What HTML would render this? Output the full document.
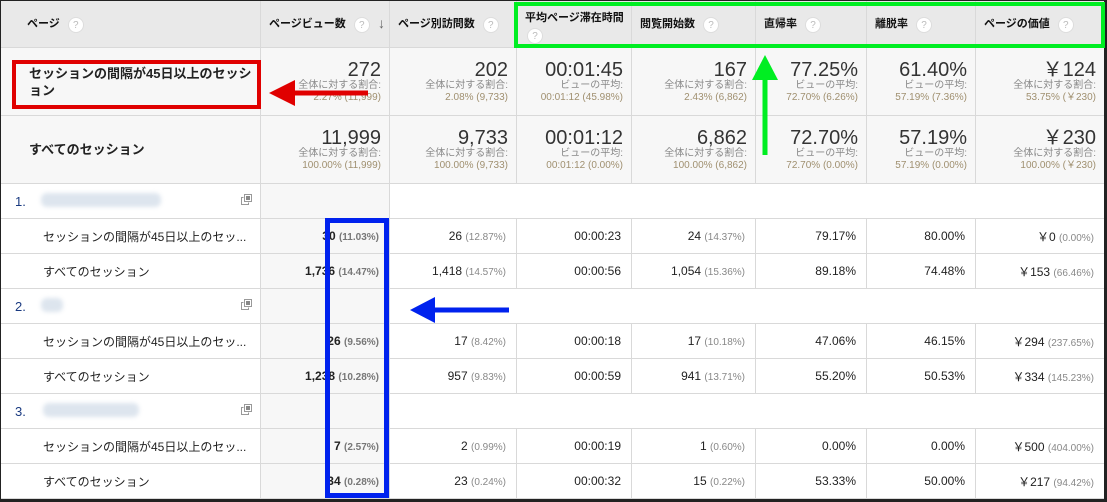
<!DOCTYPE html>
<html><head><meta charset="utf-8"><style>
*{margin:0;padding:0;box-sizing:border-box}
body{width:1107px;height:502px;background:#fff;font-family:"Liberation Sans","Noto Sans CJK JP",sans-serif;position:relative;overflow:hidden;color:#222}
table{position:absolute;left:0;top:0;border-collapse:collapse;table-layout:fixed;width:1104px}
td,th{border:1px solid #d9d9d9;overflow:hidden;white-space:nowrap}
th{background:#e9e9e9;height:47px;font-size:11px;font-weight:bold;text-align:left;padding-left:8px;color:#111}
.q{display:inline-block;width:16px;height:16px;border-radius:50%;background:#fff;color:#bbb;font-size:10px;text-align:center;line-height:16px;margin-left:8px;border:1px solid #ddd;font-weight:normal;vertical-align:middle}
.sum td{background:#f7f7f7;height:68px;text-align:right;padding-right:8px;vertical-align:top;padding-top:12px}
.sum td.l{text-align:left;padding-left:28px;vertical-align:middle;padding-top:0;font-weight:bold;font-size:13px;white-space:normal;line-height:17px}
.big{font-size:20px;color:#333;line-height:20px}
.s{font-size:10px;color:#888;line-height:12px}
.s2{font-size:10px;color:#a09070;line-height:12px}
.d td{height:35px;text-align:right;padding-right:10px;font-size:12px;color:#222}
.d td.l{text-align:left;padding-left:42px;color:#222}
.d td.pv{background:#f7f7f7;font-weight:bold}
.p{font-size:10px;color:#888;font-weight:normal}
.pv .p{font-weight:bold;color:#777}
.g td{height:35px;border-left:none;border-right:none}
.g td.l{border-left:1px solid #d9d9d9;font-size:13px;color:#1a3a80;padding-left:14px;position:relative}
.g td.pv{background:#f7f7f7;border-left:1px solid #d9d9d9;border-right:1px solid #d9d9d9}
.blur{position:absolute;top:9px;height:14px;background:#dde5ee;border-radius:6px;filter:blur(2px)}
.ic{position:absolute;right:8px;top:10px;width:11px;height:11px}
</style></head><body>
<table>
<colgroup><col style="width:260px"><col style="width:129px"><col style="width:127px"><col style="width:115px"><col style="width:124px"><col style="width:111px"><col style="width:109px"><col style="width:129px"></colgroup>
<tr><th style="padding-left:26px">ページ<span class="q">?</span></th><th>ページビュー数<span class="q">?</span><span style="float:right;margin-right:4px;color:#666;font-size:14px">↓</span></th><th>ページ別訪問数<span class="q">?</span></th><th style="vertical-align:top;padding-top:10px;line-height:14px">平均ページ滞在時間<br><span class="q" style="margin-left:2px;margin-top:3px">?</span></th><th>閲覧開始数<span class="q">?</span></th><th>直帰率<span class="q">?</span></th><th>離脱率<span class="q">?</span></th><th>ページの価値<span class="q">?</span></th></tr>
<tr class="sum"><td class="l">セッションの間隔が45日以上のセッション</td>
<td><div class="big">272</div><div class="s">全体に対する割合:</div><div class="s2">2.27% (11,999)</div></td>
<td><div class="big">202</div><div class="s">全体に対する割合:</div><div class="s2">2.08% (9,733)</div></td>
<td><div class="big">00:01:45</div><div class="s">ビューの平均:</div><div class="s2">00:01:12 (45.98%)</div></td>
<td><div class="big">167</div><div class="s">全体に対する割合:</div><div class="s2">2.43% (6,862)</div></td>
<td><div class="big">77.25%</div><div class="s">ビューの平均:</div><div class="s2">72.70% (6.26%)</div></td>
<td><div class="big">61.40%</div><div class="s">ビューの平均:</div><div class="s2">57.19% (7.36%)</div></td>
<td><div class="big">￥124</div><div class="s">全体に対する割合:</div><div class="s2">53.75% (￥230)</div></td></tr>
<tr class="sum"><td class="l">すべてのセッション</td>
<td><div class="big">11,999</div><div class="s">全体に対する割合:</div><div class="s2">100.00% (11,999)</div></td>
<td><div class="big">9,733</div><div class="s">全体に対する割合:</div><div class="s2">100.00% (9,733)</div></td>
<td><div class="big">00:01:12</div><div class="s">ビューの平均:</div><div class="s2">00:01:12 (0.00%)</div></td>
<td><div class="big">6,862</div><div class="s">全体に対する割合:</div><div class="s2">100.00% (6,862)</div></td>
<td><div class="big">72.70%</div><div class="s">ビューの平均:</div><div class="s2">72.70% (0.00%)</div></td>
<td><div class="big">57.19%</div><div class="s">ビューの平均:</div><div class="s2">57.19% (0.00%)</div></td>
<td><div class="big">￥230</div><div class="s">全体に対する割合:</div><div class="s2">100.00% (￥230)</div></td></tr>

<tr class="g"><td class="l">1.<div class="blur" style="left:40px;width:120px"></div><svg class="ic" viewBox="0 0 11 11"><rect x="3.5" y="0.5" width="7" height="7" fill="#fff" stroke="#999"/><rect x="5" y="2" width="4" height="4" fill="#888"/><path d="M2.5 3.5H0.5V10.5H7.5V8.5" fill="none" stroke="#999"/></svg></td><td class="pv"></td><td></td><td></td><td></td><td></td><td></td><td style="border-right:1px solid #d9d9d9"></td></tr>
<tr class="d"><td class="l">セッションの間隔が45日以上のセッ...</td><td class="pv">30 <span class="p">(11.03%)</span></td><td>26 <span class="p">(12.87%)</span></td><td>00:00:23</td><td>24 <span class="p">(14.37%)</span></td><td>79.17%</td><td>80.00%</td><td>￥0 <span class="p">(0.00%)</span></td></tr>
<tr class="d"><td class="l">すべてのセッション</td><td class="pv">1,736 <span class="p">(14.47%)</span></td><td>1,418 <span class="p">(14.57%)</span></td><td>00:00:56</td><td>1,054 <span class="p">(15.36%)</span></td><td>89.18%</td><td>74.48%</td><td>￥153 <span class="p">(66.46%)</span></td></tr>

<tr class="g"><td class="l">2.<div class="blur" style="left:40px;width:22px"></div><svg class="ic" viewBox="0 0 11 11"><rect x="3.5" y="0.5" width="7" height="7" fill="#fff" stroke="#999"/><rect x="5" y="2" width="4" height="4" fill="#888"/><path d="M2.5 3.5H0.5V10.5H7.5V8.5" fill="none" stroke="#999"/></svg></td><td class="pv"></td><td></td><td></td><td></td><td></td><td></td><td style="border-right:1px solid #d9d9d9"></td></tr>
<tr class="d"><td class="l">セッションの間隔が45日以上のセッ...</td><td class="pv">26 <span class="p">(9.56%)</span></td><td>17 <span class="p">(8.42%)</span></td><td>00:00:18</td><td>17 <span class="p">(10.18%)</span></td><td>47.06%</td><td>46.15%</td><td>￥294 <span class="p">(237.65%)</span></td></tr>
<tr class="d"><td class="l">すべてのセッション</td><td class="pv">1,238 <span class="p">(10.28%)</span></td><td>957 <span class="p">(9.83%)</span></td><td>00:00:59</td><td>941 <span class="p">(13.71%)</span></td><td>55.20%</td><td>50.53%</td><td>￥334 <span class="p">(145.23%)</span></td></tr>

<tr class="g"><td class="l">3.<div class="blur" style="left:42px;width:96px"></div><svg class="ic" viewBox="0 0 11 11"><rect x="3.5" y="0.5" width="7" height="7" fill="#fff" stroke="#999"/><rect x="5" y="2" width="4" height="4" fill="#888"/><path d="M2.5 3.5H0.5V10.5H7.5V8.5" fill="none" stroke="#999"/></svg></td><td class="pv"></td><td></td><td></td><td></td><td></td><td></td><td style="border-right:1px solid #d9d9d9"></td></tr>
<tr class="d"><td class="l">セッションの間隔が45日以上のセッ...</td><td class="pv">7 <span class="p">(2.57%)</span></td><td>2 <span class="p">(0.99%)</span></td><td>00:00:19</td><td>1 <span class="p">(0.60%)</span></td><td>0.00%</td><td>0.00%</td><td>￥500 <span class="p">(404.00%)</span></td></tr>
<tr class="d"><td class="l">すべてのセッション</td><td class="pv">34 <span class="p">(0.28%)</span></td><td>23 <span class="p">(0.24%)</span></td><td>00:00:32</td><td>15 <span class="p">(0.22%)</span></td><td>53.33%</td><td>50.00%</td><td>￥217 <span class="p">(94.42%)</span></td></tr>
</table>
<div style="position:absolute;left:0;top:0;width:1107px;height:502px;border:1px solid #222;border-right:3px solid #222;border-bottom:3px solid #222;pointer-events:none"></div>
<div style="position:absolute;left:12px;top:60px;width:249px;height:49px;border:4px solid #e00000"></div>
<div style="position:absolute;left:514px;top:2px;width:591px;height:46px;border:4px solid #00ee22"></div>
<div style="position:absolute;left:325px;top:218px;width:64px;height:280px;border:5px solid #0022ee"></div>
<svg style="position:absolute;left:0;top:0" width="1107" height="502">
<path d="M368 93H290" stroke="#e00000" stroke-width="5"/><polygon points="269,93 295,80 295,106" fill="#e00000"/>
<path d="M765 155V75" stroke="#00ee22" stroke-width="5"/><polygon points="765,55 752,80 778,80" fill="#00ee22"/>
<path d="M509 310H430" stroke="#0022ee" stroke-width="5"/><polygon points="410,310 435,297 435,323" fill="#0022ee"/>
</svg>
</body></html>
